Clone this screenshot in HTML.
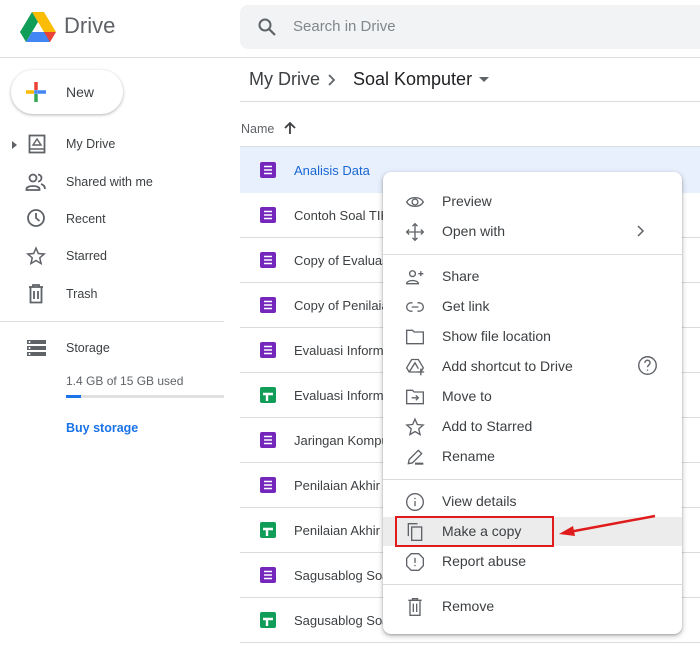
<!DOCTYPE html>
<html><head><meta charset="utf-8">
<style>
*{margin:0;padding:0;box-sizing:border-box}
body{width:700px;height:648px;overflow:hidden;background:#fff;font-family:"Liberation Sans",Arial,sans-serif;color:#3c4043;position:relative}
.abs{position:absolute}
.t{position:absolute;white-space:nowrap}
svg{position:absolute}
</style></head><body>
<svg style="left:20px;top:12px" width="36" height="30" viewBox="0 0 36 30">
<path d="M12 0h12l12 20h-12z" fill="#fbbc04"/>
<path d="M12 0L0 20l6 10 12-20z" fill="#0f9d58"/>
<path d="M6 30h24l6-10H12z" fill="#4285f4"/>
<path d="M24 20h12l-6 10z" fill="#ea4335"/>
</svg>
<div class="t" style="left:64px;top:13px;font-size:22px;color:#5f6368">Drive</div>
<div class="abs" style="left:240px;top:5px;width:470px;height:44px;background:#f1f3f4;border-radius:8px"></div>
<svg style="left:257px;top:17px" width="20" height="20" viewBox="0 0 20 20"><circle cx="8" cy="8" r="5.5" fill="none" stroke="#5f6368" stroke-width="2"/><path d="M12 12l6 6" stroke="#5f6368" stroke-width="2.2"/></svg>
<div class="t" style="left:293px;top:18px;font-size:15px;color:#80868b">Search in Drive</div>
<div class="abs" style="left:0;top:57px;width:700px;height:1px;background:#dadce0"></div>
<div class="abs" style="left:11px;top:70px;width:112px;height:44px;border-radius:22px;box-shadow:0 1px 3px rgba(0,0,0,.3);background:#fff"></div>
<svg style="left:24px;top:80px" width="24" height="24" viewBox="0 0 24 24"><path d="M12 2v8" stroke="#ea4335" stroke-width="3.5"/><path d="M12 14v8" stroke="#34a853" stroke-width="3.5"/><path d="M2 12h8" stroke="#fbbc04" stroke-width="3.5"/><path d="M14 12h8" stroke="#4285f4" stroke-width="3.5"/><rect x="10.2" y="10.2" width="3.6" height="3.6" fill="#4285f4"/></svg>
<div class="t" style="left:66px;top:84px;font-size:14px;color:#3c4043">New</div>
<svg style="left:11px;top:140px" width="8" height="10"><path d="M1 1l5 4-5 4z" fill="#5f6368"/></svg>
<svg style="left:27px;top:134px" width="20" height="20" viewBox="0 0 20 20"><rect x="2.5" y="1.5" width="15" height="17" fill="none" stroke="#5f6368" stroke-width="1.8"/><path d="M6 11l4-6 4 6z" fill="none" stroke="#5f6368" stroke-width="1.4"/><path d="M3 15h14" stroke="#5f6368" stroke-width="1.5"/></svg>
<div class="t" style="left:66px;top:137px;font-size:12.5px">My Drive</div>
<svg style="left:25px;top:172px" width="22" height="20" viewBox="0 0 22 20"><circle cx="8" cy="6" r="3.5" fill="none" stroke="#5f6368" stroke-width="1.8"/><path d="M1.5 17c0-4 13-4 13 0v1h-13z" fill="none" stroke="#5f6368" stroke-width="1.8"/><path d="M13 2.5a3.5 3.5 0 010 7M16 12c3 1 4 3 4 5" fill="none" stroke="#5f6368" stroke-width="1.8"/></svg>
<div class="t" style="left:66px;top:175px;font-size:12.5px">Shared with me</div>
<svg style="left:26px;top:208px" width="20" height="20" viewBox="0 0 20 20"><circle cx="10" cy="10" r="8" fill="none" stroke="#5f6368" stroke-width="1.8"/><path d="M10 5v5l3.5 3" fill="none" stroke="#5f6368" stroke-width="1.8"/></svg>
<div class="t" style="left:66px;top:212px;font-size:12.5px">Recent</div>
<svg style="left:26px;top:246px" width="20" height="20" viewBox="0 0 24 24"><path d="M12 2.5l2.8 6.5 7 .6-5.3 4.6 1.6 6.9L12 17.4l-6.1 3.7 1.6-6.9L2.2 9.6l7-.6z" fill="none" stroke="#5f6368" stroke-width="1.8"/></svg>
<div class="t" style="left:66px;top:249px;font-size:12.5px">Starred</div>
<svg style="left:27px;top:284px" width="18" height="20" viewBox="0 0 18 20"><path d="M2 3h14M6 3V1h6v2M3.5 3.5v15h11v-15M7 7v8M11 7v8" fill="none" stroke="#5f6368" stroke-width="1.8"/></svg>
<div class="t" style="left:66px;top:287px;font-size:12.5px">Trash</div>
<div class="abs" style="left:0;top:321px;width:224px;height:1px;background:#dadce0"></div>
<svg style="left:27px;top:340px" width="20" height="16" viewBox="0 0 20 16"><rect x="0" y="0" width="19" height="4" fill="#5f6368"/><rect x="0" y="6" width="19" height="4" fill="#5f6368"/><rect x="0" y="12" width="19" height="4" fill="#5f6368"/><circle cx="2.5" cy="2" r="1" fill="#fff"/><circle cx="2.5" cy="8" r="1" fill="#fff"/><circle cx="2.5" cy="14" r="1" fill="#fff"/></svg>
<div class="t" style="left:66px;top:341px;font-size:12.5px">Storage</div>
<div class="t" style="left:66px;top:374px;font-size:12px;color:#5f6368">1.4 GB of 15 GB used</div>
<div class="abs" style="left:66px;top:395px;width:158px;height:3px;background:#e0e0e0"></div>
<div class="abs" style="left:66px;top:395px;width:15px;height:3px;background:#1a73e8"></div>
<div class="t" style="left:66px;top:421px;font-size:12.5px;color:#1a73e8;font-weight:bold">Buy storage</div>
<div class="t" style="left:249px;top:69px;font-size:18px;color:#3c4043">My Drive</div>
<svg style="left:327px;top:73px" width="10" height="14"><path d="M2 2l5 5-5 5" fill="none" stroke="#5f6368" stroke-width="1.8"/></svg>
<div class="t" style="left:353px;top:69px;font-size:18px;color:#202124">Soal Komputer</div>
<svg style="left:478px;top:76px" width="12" height="8"><path d="M1 1h10L6 6z" fill="#5f6368"/></svg>
<div class="abs" style="left:240px;top:101px;width:460px;height:1px;background:#dadce0"></div>
<div class="t" style="left:241px;top:122px;font-size:12.5px;color:#5f6368">Name</div>
<svg style="left:283px;top:121px" width="14" height="14"><path d="M7 13V2M2 7l5-5 5 5" fill="none" stroke="#3c4043" stroke-width="1.8"/></svg>
<div class="abs" style="left:240px;top:146px;width:460px;height:1px;background:#dadce0"></div>
<div class="abs" style="left:240px;top:147px;width:460px;height:46px;background:#e8f0fe"></div>
<div id="rows"></div>
<div class="abs" style="left:383px;top:172px;width:299px;height:462px;background:#fff;border-radius:8px;box-shadow:0 2px 6px rgba(0,0,0,.25),0 1px 2px rgba(0,0,0,.2)"></div>
<div class="abs" style="left:383px;top:254px;width:299px;height:1px;background:#dadce0"></div>
<div class="abs" style="left:383px;top:479px;width:299px;height:1px;background:#dadce0"></div>
<div class="abs" style="left:383px;top:584px;width:299px;height:1px;background:#dadce0"></div>
<div class="abs" style="left:383px;top:517px;width:299px;height:29px;background:#ececec"></div>
<div id="menu"></div>
<div class="abs" style="left:395px;top:516px;width:159px;height:31px;border:2.5px solid #e01b1b"></div>
<svg style="left:555px;top:512px" width="104" height="26"><path d="M100 4L14 20" stroke="#e01b1b" stroke-width="2.5"/><path d="M4 22l14-8 2 10z" fill="#e01b1b"/></svg>
<script>
var files=[["Analisis Data",0],["Contoh Soal TIK",0],["Copy of Evaluasi",0],["Copy of Penilaian",0],["Evaluasi Informatika",0],["Evaluasi Informatika",1],["Jaringan Komputer",0],["Penilaian Akhir S",0],["Penilaian Akhir S",1],["Sagusablog Soal",0],["Sagusablog Soal",1]];
var h="";
files.forEach(function(f,i){var y=170+45*i;
var c=f[1]?"#0f9d58":"#7627bb";
h+='<svg style="left:260px;top:'+(y-8)+'px" width="16" height="16" viewBox="0 0 16 16"><rect width="16" height="16" rx="2" fill="'+c+'"/>'+(f[1]?'<path d="M3 7h10M7 7v7" stroke="#fff" stroke-width="2.4"/>':'<path d="M4 4.5h8M4 8h8M4 11.5h8" stroke="#fff" stroke-width="1.6"/>')+'</svg>';
h+='<div class="t" style="left:294px;top:'+(y-7)+'px;font-size:13px;color:'+(i==0?'#1967d2':'#3c4043')+'">'+f[0]+'</div>';
if(i>0)h+='<div class="abs" style="left:240px;top:'+(y+22)+'px;width:460px;height:1px;background:#dadce0"></div>';
});
document.getElementById("rows").innerHTML=h;
var s='fill="none" stroke="#5f6368" stroke-width="1.6"';
var items=[["Preview",201,'<path d="M2 12c4-7 16-7 20 0-4 7-16 7-20 0z" '+s+'/><circle cx="12" cy="12" r="3.5" '+s+'/>'],
["Open with",231,'<path d="M12 2v20M2 12h20M9 5l3-3 3 3M9 19l3 3 3-3M5 9l-3 3 3 3M19 9l3 3-3 3" '+s+'/>'],
["Share",276,'<circle cx="9" cy="8" r="3.5" '+s+'/><path d="M2 20c0-5 14-5 14 0z" '+s+'/><path d="M19 5v6M16 8h6" '+s+'/>'],
["Get link",306,'<path d="M9 7H7a5 5 0 000 10h2M15 7h2a5 5 0 010 10h-2M8 12h8" '+s+'/>'],
["Show file location",336,'<path d="M2 4h7l2 2h11v14H2z" '+s+'/>'],
["Add shortcut to Drive",366,'<path d="M8 3h8l6 10-3 5H5l-3-5z M5 18l7-11 4 7" '+s+'/><path d="M19 14v8M15 18h8" '+s+'/>'],
["Move to",396,'<path d="M2 4h7l2 2h11v14H2z" '+s+'/><path d="M8 13h8M13 10l3 3-3 3" '+s+'/>'],
["Add to Starred",426,'<path d="M12 2.5l2.8 6.5 7 .6-5.3 4.6 1.6 6.9L12 17.4l-6.1 3.7 1.6-6.9L2.2 9.6l7-.6z" '+s+'/>'],
["Rename",456,'<path d="M4 20l1-5L16 4l4 4L9 19z" '+s+'/><path d="M12 20h10" stroke="#5f6368" stroke-width="2.5"/>'],
["View details",501,'<circle cx="12" cy="12" r="10" '+s+'/><path d="M12 11v6M12 7v1.5" '+s+'/>'],
["Make a copy",531,'<path d="M4 17V2h11" '+s+'/><rect x="8" y="6" width="12" height="16" '+s+'/>'],
["Report abuse",561,'<path d="M7.5 2h9L22 7.5v9L16.5 22h-9L2 16.5v-9z" '+s+'/><path d="M12 7v6M12 15.5v1.5" '+s+'/>'],
["Remove",606,'<path d="M4 4h16M9 4V2h6v2M6 5v17h12V5M10 8v10M14 8v10" '+s+'/>']];
var m="";
items.forEach(function(it){m+='<svg style="left:405px;top:'+(it[1]-9)+'px" width="20" height="20" viewBox="0 0 24 24">'+it[2]+'</svg><div class="t" style="left:442px;top:'+(it[1]-8)+'px;font-size:14px;color:#3c4043">'+it[0]+'</div>';});
m+='<svg style="left:636px;top:225px" width="10" height="12"><path d="M2 1l5 5-5 5" fill="none" stroke="#5f6368" stroke-width="1.5"/></svg>';
m+='<svg style="left:637px;top:355px" width="21" height="21" viewBox="0 0 24 24"><circle cx="12" cy="12" r="10" '+s+'/><path d="M9 9a3 3 0 116 0c0 2-3 2.5-3 5M12 16.5v1.5" '+s+'/></svg>';
document.getElementById("menu").innerHTML=m;
</script>
</body></html>
